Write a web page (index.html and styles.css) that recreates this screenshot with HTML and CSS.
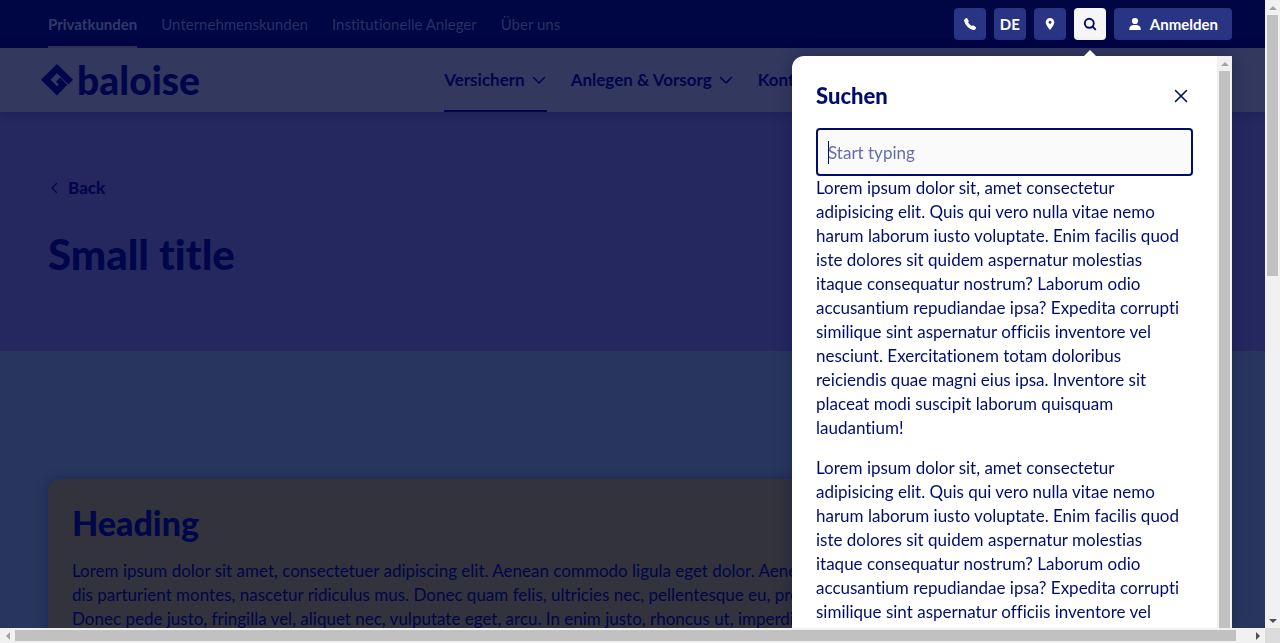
FILE: index.html
```html
<!DOCTYPE html>
<html lang="de">
<head>
<meta charset="utf-8">
<meta name="viewport" content="width=device-width, initial-scale=1">
<title>Baloise</title>
<link rel="stylesheet" href="styles.css">
</head>
<body>
<div class="frame">
  <div class="page">
    <header>
      <div class="meta-bar">
        <nav class="meta-links" aria-label="Portale">
          <a class="meta-link is-active" href="#">Privatkunden</a>
          <a class="meta-link" href="#">Unternehmenskunden</a>
          <a class="meta-link" href="#">Institutionelle Anleger</a>
          <a class="meta-link" href="#">Über uns</a>
        </nav>
        <div class="actions">
          <button class="action" aria-label="Kontakt"><svg width="16" height="16" viewBox="0 0 16 16"><path d="M2.200 3.700 4.200 2Q4.800 1.700 5.200 2.200L6.700 4.900Q6.900 5.400 6.500 5.800L6.100 6.500Q7.600 8.700 9.700 10L10.500 9.600Q11 9.300 11.500 9.600L13.900 11.200Q14.400 11.700 14 12.300L12.900 13.800Q12.200 14.300 11.100 14 4 11.600 2 4.700 1.900 4 2.200 3.700Z" fill="currentColor"/></svg></button>
          <button class="action">DE</button>
          <button class="action" aria-label="Standorte"><svg width="16" height="16" viewBox="0 0 16 16"><path d="M8 2a4.300 4.300 0 0 0-4.300 4.300C3.700 9 6.300 11.800 8 14c1.700-2.200 4.300-5 4.300-7.700A4.300 4.300 0 0 0 8 2Zm0 2.800a1.500 1.500 0 1 1 0 3 1.500 1.500 0 0 1 0-3Z" fill="currentColor" fill-rule="evenodd"/></svg></button>
          <button class="action is-open" aria-label="Suchen"><svg width="16" height="16" viewBox="0 0 16 16" fill="none" stroke="currentColor" stroke-width="1.900" stroke-linecap="round"><circle cx="7.300" cy="7.300" r="4.500"/><path d="m10.600 10.600 2.700 2.700"/></svg></button>
          <button class="action action-login"><svg width="14" height="14" viewBox="0 0 14 14"><circle cx="7" cy="4" r="3.100" fill="currentColor"/><path d="M1.200 13c0-3.200 1.700-4.700 4-4.900h3.600c2.300.2 4 1.700 4 4.900Z" fill="currentColor"/></svg>Anmelden</button>
        </div>
      </div>
      <div class="main-bar">
        <div class="logo-slot"><a class="logo" href="#">
          <svg width="34" height="34" viewBox="0 0 34 34"><path d="M17 1 33 16.800 28.400 21.500 17 10.200 10.500 16.800 17 23.200 18.900 21.400 16 18.700 20.300 14.500 27.300 21.800 17 32.500 1 16.800Z" fill="currentColor"/></svg>
          <span>baloise</span></a></div>
        <nav class="main-nav" aria-label="Hauptnavigation">
          <button class="nav-item is-active">Versichern<svg width="16" height="16" viewBox="0 0 16 16"><path d="m2.500 5.500 5.500 5.500 5.500-5.500"/></svg></button>
          <button class="nav-item">Anlegen &amp; Vorsorg<svg width="16" height="16" viewBox="0 0 16 16"><path d="m2.500 5.500 5.500 5.500 5.500-5.500"/></svg></button>
          <button class="nav-item">Konto</button>
        </nav>
      </div>
    </header>
    <main>
      <section class="hero">
        <a class="back" href="#"><svg width="12" height="12" viewBox="0 0 12 12"><path d="M8.500 1.500 4 6l4.500 4.500"/></svg>Back</a>
        <h1>Small title</h1>
      </section>
      <section class="content">
        <article class="card">
          <h2>Heading</h2>
          <p>Lorem ipsum dolor sit amet, consectetuer adipiscing elit. Aenean commodo ligula eget dolor. Aenean<br>dis parturient montes, nascetur ridiculus mus. Donec quam felis, ultricies nec, pellentesque eu, pretium<br>Donec pede justo, fringilla vel, aliquet nec, vulputate eget, arcu. In enim justo, rhoncus ut, imperdiet</p>
        </article>
      </section>
    </main>
    <div class="popover" role="dialog" aria-labelledby="search-title">
      <div class="popover-box">
        <div class="popover-body">
          <div class="popover-head">
            <h3 id="search-title">Suchen</h3>
            <button class="close" aria-label="Schliessen"><svg width="16" height="16" viewBox="0 0 16 16"><path d="m2.500 2.500 11 11m0-11-11 11"/></svg></button>
          </div>
          <div class="field"><input class="search" type="text" placeholder="Start typing" aria-label="Suchen"></div>
          <p>Lorem ipsum dolor sit, amet consectetur<br>adipisicing elit. Quis qui vero nulla vitae nemo<br>harum laborum iusto voluptate. Enim facilis quod<br>iste dolores sit quidem aspernatur molestias<br>itaque consequatur nostrum? Laborum odio<br>accusantium repudiandae ipsa? Expedita corrupti<br>similique sint aspernatur officiis inventore vel<br>nesciunt. Exercitationem totam doloribus<br>reiciendis quae magni eius ipsa. Inventore sit<br>placeat modi suscipit laborum quisquam<br>laudantium!</p>
          <p>Lorem ipsum dolor sit, amet consectetur<br>adipisicing elit. Quis qui vero nulla vitae nemo<br>harum laborum iusto voluptate. Enim facilis quod<br>iste dolores sit quidem aspernatur molestias<br>itaque consequatur nostrum? Laborum odio<br>accusantium repudiandae ipsa? Expedita corrupti<br>similique sint aspernatur officiis inventore vel</p>
        </div>
        <div class="bar bar-y"><i class="arrow up"></i><i class="thumb"></i></div>
      </div>
    </div>
  </div>
  <div class="bar bar-y page-y"><i class="arrow up"></i><i class="thumb"></i><i class="arrow down"></i></div>
  <div class="bar bar-x"><i class="arrow left"></i><i class="thumb"></i><i class="arrow right"></i></div>
  <div class="corner"></div>
</div>
</body>
</html>
```

FILE: styles.css
```css
:root {
  --ink: #000d6e;
  --ink-dim: #000649;
  --track: #f1f1f1;
  --thumb: #c1c1c1;
}
* { box-sizing: border-box; }
body {
  margin: 0;
  font: 17px/24px Lato, "Open Sans", sans-serif;
  font-variant-ligatures: none;
  color: var(--ink-dim);
}
h1, h2, h3, p { margin: 0; }
a { color: inherit; text-decoration: none; }
button { font: inherit; color: inherit; border: 0; padding: 0; background: none; cursor: pointer; }
svg { display: block; flex: none; }

.frame {
  display: grid;
  grid-template-columns: minmax(0, 1fr) 15px;
  grid-template-rows: minmax(0, 1fr) 15px;
  height: 100vh;
}
.page {
  position: relative;
  display: flex;
  flex-direction: column;
  overflow: hidden;
  background: #28365d;
}
main { flex: 1; }

.meta-bar {
  display: flex;
  justify-content: space-between;
  height: 48px;
  padding: 0 33px 0 48px;
  background: #000544;
}
.meta-links { display: flex; gap: 24px; }
.meta-link {
  display: flex;
  align-items: center;
  font-size: 15px;
  color: #2a3063;
  border-bottom: 2px solid transparent;
  border-top: 2px solid transparent;
}
.meta-link.is-active { font-weight: 700; color: #33396a; border-bottom-color: #33385e; }
.actions { display: flex; align-items: center; gap: 8px; }
.action {
  display: flex;
  align-items: center;
  justify-content: center;
  width: 32px;
  height: 32px;
  border-radius: 4px;
  background: #293485;
  color: #fff;
  font-size: 15px;
  font-weight: 700;
}
.action.is-open { background: #f6f6f6; color: var(--ink); }
.action-login { width: auto; gap: 8px; padding: 0 14px; }

.main-bar {
  position: relative;
  display: flex;
  height: 64px;
  padding-left: 40px;
  background: #33385e;
  box-shadow: 0 0 10px rgba(0, 5, 60, .3);
}
.logo-slot { flex: 0 0 33%; display: flex; align-items: center; }
.logo { display: flex; align-items: center; gap: 3px; font-size: 39px; font-weight: 900; line-height: 48px; }
.main-nav { display: flex; gap: 24px; }
.nav-item {
  display: flex;
  align-items: center;
  gap: 6px;
  font-weight: 700;
  white-space: nowrap;
  border-top: 2px solid transparent;
  border-bottom: 2px solid transparent;
}
.nav-item.is-active { border-bottom-color: var(--ink-dim); }
.nav-item svg, .back svg, .close svg {
  fill: none;
  stroke: currentColor;
  stroke-width: 1.6;
  stroke-linecap: round;
  stroke-linejoin: round;
}

.hero { height: 239px; padding: 64px 48px; background: #25285f; }
.back { display: inline-flex; align-items: center; gap: 8px; font-weight: 900; }
.back svg { stroke-width: 1.3; }
.hero h1 { margin-top: 26px; font-size: 42px; line-height: 56px; font-weight: 900; }
.content { padding: 128px 48px 0; }
.card {
  height: 240px;
  padding: 24px;
  border-radius: 12px;
  background: #33333d;
  box-shadow: 0 0 12px rgba(0, 5, 70, .3);
  white-space: nowrap;
}
.card h2 { margin-bottom: 16px; font-size: 34px; line-height: 40px; font-weight: 900; }

.popover {
  position: absolute;
  top: 56px;
  right: 33px;
  bottom: 0;
  width: 440px;
  filter: drop-shadow(0 0 8px rgba(0, 5, 60, .3));
}
.popover::before {
  content: "";
  position: absolute;
  top: -6px;
  right: 136px;
  border: 6px solid transparent;
  border-top: 0;
  border-bottom-color: #fff;
}
.popover-box {
  display: flex;
  height: 100%;
  overflow: hidden;
  border-radius: 12px 0 0 0;
  background: #fff;
  color: var(--ink);
}
.popover-body { flex: 1; min-width: 0; padding: 24px; white-space: nowrap; }
.popover-head { display: flex; align-items: center; justify-content: space-between; height: 32px; margin-bottom: 16px; }
.popover-head h3 { font-size: 22px; font-weight: 900; }
.close { padding: 4px; }
.field { position: relative; }
/* text cursor of the focused field */
.field::after {
  content: "";
  position: absolute;
  top: 13px;
  left: 12px;
  width: 1px;
  height: 23px;
  background: var(--ink);
}
.search {
  display: block;
  width: 100%;
  height: 48px;
  padding: 0 10px;
  border: 2px solid var(--ink);
  border-radius: 4px;
  outline: 0;
  background: #fafafa;
  color: var(--ink);
  font: inherit;
}
.search::placeholder { color: #656eab; opacity: 1; }
.popover-body p { margin-bottom: 16px; }

.bar { display: flex; align-items: center; background: var(--track); }
.bar-y { flex-direction: column; width: 15px; }
.thumb { background: var(--thumb); }
.bar-y .thumb { flex: 1; width: 11px; }
.page-y .thumb { flex: 0 0 41.5%; }
.page-y .down { margin-top: auto; }
.bar-x .thumb { flex: 0 0 96.5%; height: 11px; }
.bar-x .right { margin-left: auto; }
.arrow { display: flex; align-items: center; justify-content: center; flex: none; width: 15px; height: 15px; color: #a3a3a3; }
.arrow::before { content: ""; border: 4px solid transparent; }
.up::before { border-top: 0; border-bottom-color: currentColor; }
.left::before { border-left: 0; border-right-color: currentColor; }
.down, .right { color: #505050; }
.down::before { border-bottom: 0; border-top-color: currentColor; }
.right::before { border-right: 0; border-left-color: currentColor; }
.corner { background: #dcdcdc; }
```
